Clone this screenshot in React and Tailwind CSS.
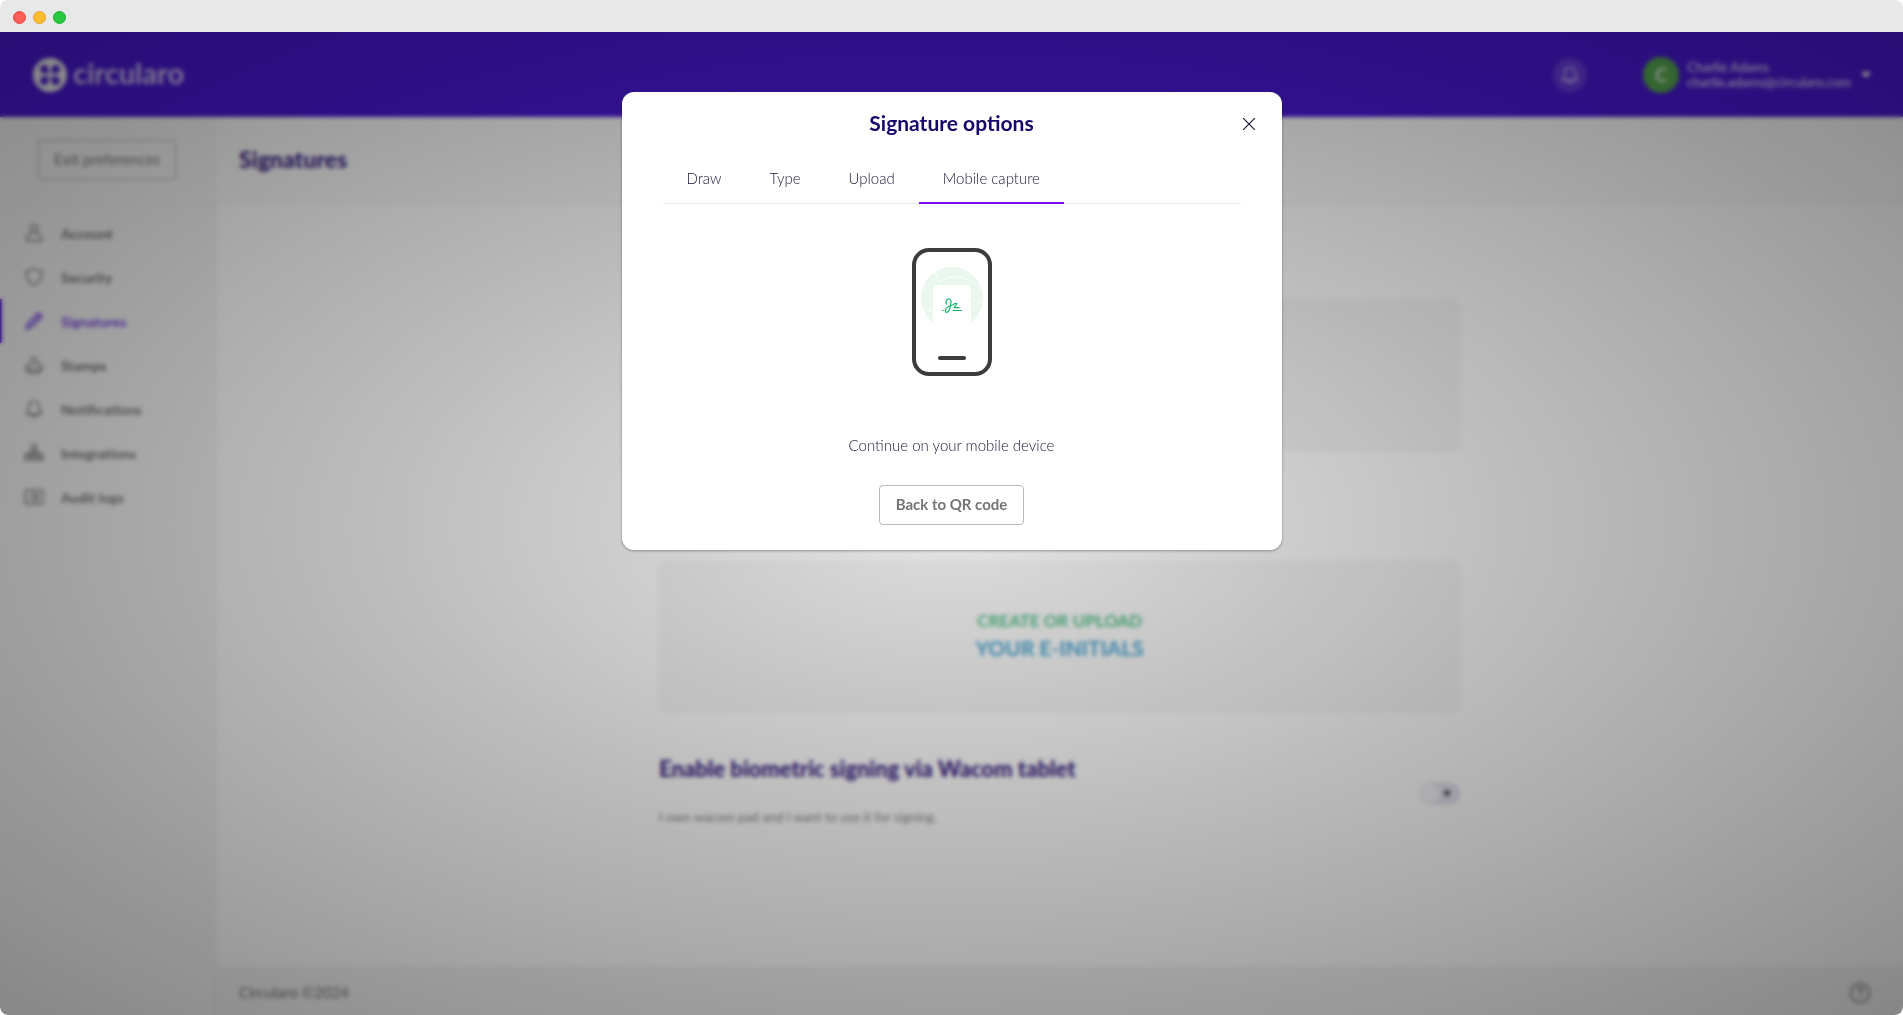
import React from "react";

const NAV = [
  { label: "Account", icon: AccountIcon },
  { label: "Security", icon: ShieldIcon },
  { label: "Signatures", icon: PencilIcon, active: true },
  { label: "Stamps", icon: StampIcon },
  { label: "Notifications", icon: BellIcon },
  { label: "Integrations", icon: IntegrationsIcon },
  { label: "Audit logs", icon: LogsIcon },
];

const TABS = ["Draw", "Type", "Upload", "Mobile capture"];

function Svg({ size = 20, children }) {
  return (
    <svg
      width={size}
      height={size}
      viewBox="0 0 20 20"
      fill="none"
      stroke="currentColor"
      strokeWidth="1.4"
      strokeLinecap="round"
      strokeLinejoin="round"
      aria-hidden="true"
    >
      {children}
    </svg>
  );
}

function AccountIcon() {
  return (
    <Svg>
      <circle cx="10" cy="5.5" r="3.8" />
      <path d="M7.5 9.5c0 2-5 2.5-5 6v2.300h15v-2.300c0-3.500-5-4-5-6" />
    </Svg>
  );
}

function ShieldIcon() {
  return (
    <Svg>
      <path d="M10 1.800c2.500 1.500 5 2 7.800 2.200.4 6.500-1.800 11.500-7.800 14.200C4 15.500 1.800 10.500 2.200 4 5 3.800 7.500 3.300 10 1.800z" />
    </Svg>
  );
}

function PencilIcon() {
  return (
    <Svg>
      <path
        d="M2 18l1.200-5L13.500 2.700a2 2 0 0 1 2.800 0l1 1a2 2 0 0 1 0 2.800L7 16.800z"
        fill="currentColor"
        fillOpacity="0.45"
      />
      <path d="M12 4.500l3.500 3.500" />
    </Svg>
  );
}

function StampIcon() {
  return (
    <Svg>
      <path d="M8.200 8.800c0-1.200-1-2-1-3.600a2.800 2.800 0 0 1 5.600 0c0 1.600-1 2.400-1 3.600 3.800.4 6.400 1.600 6.400 4.200v1.500H1.800V13c0-2.600 2.600-3.800 6.400-4.200z" />
      <path d="M4 14.600v3.200h12v-3.200" />
    </Svg>
  );
}

function BellIcon({ size }) {
  return (
    <Svg size={size}>
      <path d="M10 2.200c-3.300 0-5 2.400-5 5.400 0 4-.9 5.600-2.500 7.700h15C15.900 13.200 15 11.600 15 7.600c0-3-1.700-5.400-5-5.400z" />
      <path d="M8 15.500c0 3 4 3 4 0" />
    </Svg>
  );
}

function IntegrationsIcon() {
  return (
    <Svg>
      <rect x="7.500" y="2" width="5" height="5" rx="1" />
      <rect x="1" y="11" width="5" height="6" rx="1" fill="currentColor" fillOpacity="0.2" />
      <rect x="7.500" y="11" width="5" height="6" rx="1" fill="currentColor" fillOpacity="0.2" />
      <rect x="14" y="11" width="5" height="6" rx="1" fill="currentColor" fillOpacity="0.2" />
      <path d="M10 7v4M4 11l4-3M16 11l-4-3" />
    </Svg>
  );
}

function LogsIcon() {
  return (
    <Svg>
      <rect x="1" y="3" width="18" height="14" rx="1.500" />
      <path d="M8 7h7M8 10h7M8 13h7M4.800 7h.4M4.800 10h.4M4.800 13h.4" />
    </Svg>
  );
}

function Logo() {
  return (
    <svg width="34" height="34" viewBox="0 0 34 34" aria-hidden="true">
      <circle cx="17" cy="17" r="17" fill="#f0f0f0" />
      <g fill="#4a19d4">
        <path d="M15.500 15.500h-4a4.200 4.200 0 1 1 4-4z" />
        <path d="M18.500 15.500h4a4.200 4.200 0 1 0-4-4z" />
        <path d="M15.500 18.500h-4a4.200 4.200 0 1 0 4 4z" />
        <path d="M18.500 18.500h4a4.200 4.200 0 1 1-4 4z" />
      </g>
    </svg>
  );
}

function PhoneIllustration() {
  return (
    <svg width="80" height="128" viewBox="0 0 80 128" fill="none" role="img" aria-label="Mobile phone">
      <rect x="2" y="2" width="76" height="124" rx="15" fill="#fff" stroke="#3c3c3c" strokeWidth="4" />
      <circle cx="40" cy="50" r="31" fill="#e9f7ee" />
      <g stroke="#fff" strokeWidth="1">
        <path d="M23 24l5 10c9-7 24-8 41 6" />
        <path d="M60 50l8 6 2-5" />
        <path d="M9 59c4 3 8 4 12 4" />
      </g>
      <path d="M21 82V43q0-6 6-6h26q6 0 6 6v39z" fill="#fff" />
      <g stroke="#12b566" strokeWidth="1.200" strokeLinecap="round" strokeLinejoin="round">
        <path d="M34.500 56c-1-1.500-.5-4 1-4.800 2-.8 3.800.3 3.500 2.800-.3 3-.8 6-2 8.500-1 2.200-3.500 2.600-3.700.3-.2-3.300 5-5.300 8.700-6.300" />
        <path d="M42.300 55.500h2.500l-2.600 4.200h5" />
        <path d="M41 62.500h8.500M30.500 62.500h.6" />
      </g>
      <rect x="26" y="108" width="28" height="4" rx="2" fill="#3c3c3c" />
    </svg>
  );
}

function Header() {
  return (
    <header className="flex h-[85px] shrink-0 items-center justify-between bg-[#4a19d4] pr-8 pl-[33px] text-white">
      <a href="#home" className="flex items-center gap-1.5">
        <Logo />
        <span className="pb-1 text-[29px] leading-8 font-bold text-white/75">circularo</span>
      </a>
      <div className="flex items-center">
        <button
          type="button"
          aria-label="Notifications"
          className="mr-14 flex size-[34px] items-center justify-center rounded-full bg-white/15 text-white/70"
        >
          <BellIcon size={20} />
        </button>
        <button type="button" className="flex items-center text-left">
          <span className="mr-2 flex size-9 items-center justify-center rounded-full bg-[#55a94f] text-lg font-bold text-white/85">
            C
          </span>
          <span className="flex flex-col text-[13px] leading-[15px] text-white/85">
            <span>Charlie Adams</span>
            <span>charlie.adams@circularo.com</span>
          </span>
          <svg width="10" height="6" viewBox="0 0 10 6" className="ml-2.5" aria-hidden="true">
            <path d="M0 0h10L5 6z" fill="#fff" />
          </svg>
        </button>
      </div>
    </header>
  );
}

function Sidebar() {
  return (
    <aside className="flex w-[216px] shrink-0 flex-col border-r border-[#eeeeee] bg-[#f6f6f6]">
      <div className="flex h-[87px] items-center border-b border-[#ececec] pl-[38px]">
        <button
          type="button"
          className="h-10 w-[138px] rounded border border-[#ababab] pb-0.5 text-[15px] text-[#808080]"
        >
          Exit preferences
        </button>
      </div>
      <nav className="flex flex-col pt-[7px]">
        {NAV.map(({ label, icon: Icon, active }) => (
          <a
            key={label}
            href={"#" + label.toLowerCase().replace(" ", "-")}
            aria-current={active ? "page" : undefined}
            className={
              active
                ? "flex h-11 items-center gap-[17px] border-l-2 border-[#4b10dd] pl-[22px] text-[14px] font-bold text-[#7a4ae4]"
                : "flex h-11 items-center gap-[17px] border-l-2 border-transparent pl-[22px] text-[14px] font-bold text-[#7a7a7a]"
            }
          >
            <Icon />
            {label}
          </a>
        ))}
      </nav>
    </aside>
  );
}

function Preferences() {
  return (
    <div className="flex min-w-0 flex-1 flex-col bg-white">
      <div className="flex h-[87px] shrink-0 items-center border-b border-[#f0f0f0] bg-[#fbfbfb] pb-0.5 pl-[23px]">
        <h1 className="text-[23px] font-black text-[#3c2485]">Signatures</h1>
      </div>
      <main className="mx-auto flex w-full max-w-[801px] flex-1 flex-col pt-24">
        <div className="h-[151px] rounded-lg border border-[#f0f0f0] bg-[#f7f7f7]" />
        <button
          type="button"
          className="mt-[110px] flex h-[151px] flex-col items-center justify-center rounded-lg border border-[#f0f0f0] bg-[#f7f7f7] pb-1 font-bold"
        >
          <span className="text-[17px] leading-[26px] text-[#55bd8a]">CREATE OR UPLOAD</span>
          <span className="text-[21px] leading-[28px] text-[#4ba6d0]">YOUR E-INITIALS</span>
        </button>
        <div className="mt-[43px] flex items-center justify-between">
          <div>
            <h2 className="text-[22px] leading-[28px] font-black text-[#3c2485]">
              Enable biometric signing via Wacom tablet
            </h2>
            <p className="mt-6 text-[13px] leading-5 text-[#8f8f8f]">
              I own wacom pad and I want to use it for signing.
            </p>
          </div>
          <label className="relative mt-1 flex h-[21px] w-10 items-center rounded-full">
            <input
              type="checkbox"
              role="switch"
              aria-label="Enable biometric signing via Wacom tablet"
              className="absolute inset-0 appearance-none rounded-full border border-[#d6d2e8] bg-[#e4e1ee]"
            />
            <span className="relative ml-px size-[19px] rounded-full bg-[#f6f6f8]" />
            <span className="relative ml-1 size-1.5 rounded-sm bg-[#4a4a4a]" />
          </label>
        </div>
      </main>
      <footer className="flex h-12 shrink-0 items-center justify-between border-t border-[#ececec] bg-[#f5f5f5] pt-0.5 pr-8 pl-[23px] text-[15px] text-[#7a7a7a]">
        <span>Circularo ©2024</span>
        <a href="#help" aria-label="Help">
          <svg
            width="22"
            height="22"
            viewBox="0 0 22 22"
            fill="none"
            stroke="currentColor"
            strokeWidth="1.600"
            strokeLinecap="round"
            aria-hidden="true"
          >
            <circle cx="11" cy="11" r="9.500" />
            <path d="M8.300 8.500c.2-3.500 5.600-3.300 5.500-.1 0 2-2.700 2-2.800 4.100M11 15.800v.2" />
          </svg>
        </a>
      </footer>
    </div>
  );
}

function SignatureDialog() {
  return (
    <section
      role="dialog"
      aria-modal="true"
      aria-labelledby="dialog-title"
      className="relative mt-[60px] flex w-full max-w-[660px] flex-col items-center rounded-xl bg-white px-[41px] pb-[25px] shadow-[0_1px_3px_rgba(0,0,0,0.35)]"
    >
      <h2 id="dialog-title" className="pt-[17px] text-[21px] leading-7 font-bold text-[#17066b]">
        Signature options
      </h2>
      <button type="button" aria-label="Close" className="absolute top-[22px] right-[23px] p-1 text-[#1b1735]">
        <svg width="12" height="12" viewBox="0 0 12 12" stroke="currentColor" strokeWidth="1.200" aria-hidden="true">
          <path d="M0 0l12 12M12 0L0 12" />
        </svg>
      </button>
      <div role="tablist" className="mt-6 flex w-full border-b border-[#e9e9ec] text-[15px] font-light text-[#1d1638]">
        {TABS.map((tab) => {
          const selected = tab === "Mobile capture";
          return (
            <button
              key={tab}
              type="button"
              role="tab"
              aria-selected={selected}
              className={
                selected
                  ? "-mb-px h-[43px] border-b-2 border-[#7a0df5] px-6 pb-1.5"
                  : "-mb-px h-[43px] border-b-2 border-transparent px-6 pb-1.5"
              }
            >
              {tab}
            </button>
          );
        })}
      </div>
      <div className="pt-11">
        <PhoneIllustration />
      </div>
      <p className="mt-[58px] text-[15px] leading-[22px] font-light text-[#1d1638]">Continue on your mobile device</p>
      <button
        type="button"
        className="mt-[29px] h-10 rounded border border-[#b9b9b9] px-4 pb-0.5 text-[15px] font-bold text-[#757575]"
      >
        Back to QR code
      </button>
    </section>
  );
}

export default function App() {
  return (
    <div className="flex min-h-screen flex-col overflow-hidden rounded-lg bg-[#e8e8e8] font-['Lato',sans-serif]">
      <div className="flex h-8 shrink-0 items-center gap-[7px] pt-0.5 pl-[13px]">
        <span className="size-[13px] rounded-full border border-[#e2463f] bg-[#ff5f57]" />
        <span className="size-[13px] rounded-full border border-[#e1a032] bg-[#ffbd2e]" />
        <span className="size-[13px] rounded-full border border-[#1dad2f] bg-[#28c941]" />
      </div>
      <div className="relative flex flex-1 flex-col">
        <Header />
        <div className="flex flex-1">
          <Sidebar />
          <Preferences />
        </div>
        <div className="absolute inset-0 flex items-start justify-center bg-[radial-gradient(ellipse_farthest-corner_at_center,rgba(0,0,0,0.1)_0%,rgba(0,0,0,0.26)_42%,rgba(0,0,0,0.38)_78%,rgba(0,0,0,0.45)_100%)] backdrop-blur-[2px]">
          <SignatureDialog />
        </div>
      </div>
    </div>
  );
}
